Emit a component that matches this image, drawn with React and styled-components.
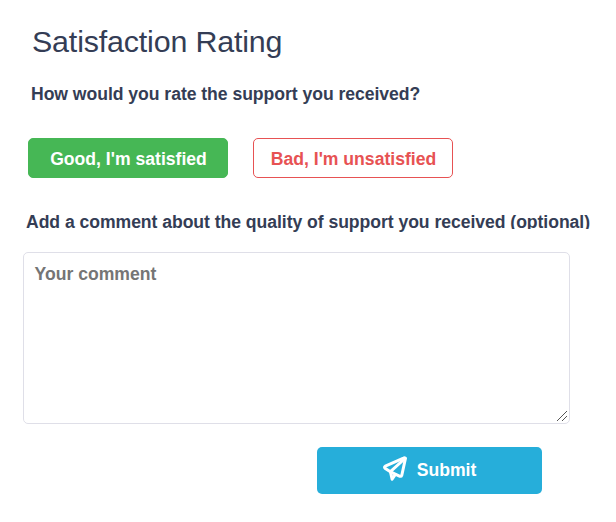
import styled, { createGlobalStyle } from 'styled-components';

const GlobalStyle = createGlobalStyle`
  *, *::before, *::after {
    box-sizing: border-box;
  }

  body {
    margin: 0;
    background-color: #fff;
    color: #343d55;
    font-family: 'Liberation Sans', Arial, sans-serif;
  }
`;

const RatingForm = styled.form`
  display: flex;
  flex-direction: column;
  align-items: flex-start;
  width: 616px;
  height: 522px;
  padding: 21px 0 0 23px;
  overflow: hidden;
`;

const Title = styled.h1`
  margin: 0 0 0 9px;
  font-size: 30.4px;
  font-weight: 400;
  letter-spacing: -0.16px;
  line-height: 40px;
`;

const Question = styled.p`
  margin: 21px 0 0 8px;
  font-size: 17.6px;
  font-weight: 700;
  letter-spacing: -0.04px;
  line-height: 24px;
`;

const RatingButtons = styled.div`
  display: flex;
  gap: 25px;
  margin: 32px 0 0 5px;
`;

const RatingButton = styled.button`
  width: 200px;
  height: 40px;
  padding: 2px 0 0 1px;
  border: 1px solid ${ ({ $color }) => $color };
  border-radius: 5px;
  background-color: ${ ({ $filled, $color }) => $filled ? $color : '#fff' };
  color: ${ ({ $filled, $color }) => $filled ? '#fff' : $color };
  font: 700 17.6px 'Liberation Sans', Arial, sans-serif;
`;

const CommentLabel = styled.label`
  margin: 32px 0 0 3px;
  font-size: 17.6px;
  font-weight: 700;
  letter-spacing: -0.045px;
  line-height: 24px;
  white-space: nowrap;
`;

const OptionalHint = styled.span`
  display: inline-block;
  height: 19px;
  overflow: hidden;
  vertical-align: top;
`;

const CommentBox = styled.div`
  position: relative;
  width: 547px;
  height: 172px;
  margin-top: 18px;
`;

const CommentField = styled.textarea`
  display: block;
  width: 100%;
  height: 100%;
  padding: 11px 10.5px;
  border: 1px solid #dfdfe8;
  border-radius: 5px;
  background-color: #fff;
  color: #343d55;
  font: 700 17.6px 'Liberation Sans', Arial, sans-serif;
  resize: none;

  &::placeholder {
    color: #757575;
  }
`;

const ResizeGrip = styled.svg`
  position: absolute;
  right: 2px;
  bottom: 2px;
  width: 12px;
  height: 12px;
  fill: none;
  stroke: #555;
  stroke-width: 1;
  pointer-events: none;
`;

const SubmitButton = styled.button`
  display: flex;
  align-items: center;
  justify-content: center;
  gap: 7px;
  width: 225px;
  height: 47px;
  margin: 23px 0 0 294px;
  padding: 0 3px 1px 0;
  border: 0;
  border-radius: 5px;
  background-color: #26aeda;
  color: #fff;
  font: 700 17.6px 'Liberation Sans', Arial, sans-serif;
`;

const SubmitIcon = styled.svg`
  width: 30px;
  height: 30px;
  margin-bottom: 4px;
  fill: none;
  stroke: currentColor;
  stroke-width: 3;
  stroke-linecap: round;
  stroke-linejoin: round;
`;

export default function App() {
  return (
    <>
      <GlobalStyle />
      <RatingForm>
        <Title>Satisfaction Rating</Title>
        <Question>How would you rate the support you received?</Question>
        <RatingButtons>
          <RatingButton type="button" $color="#46b755" $filled>Good, I'm satisfied</RatingButton>
          <RatingButton type="button" $color="#e75253">Bad, I'm unsatisfied</RatingButton>
        </RatingButtons>
        <CommentLabel htmlFor="comment">
          Add a comment about the quality of support you received <OptionalHint>(optional)</OptionalHint>
        </CommentLabel>
        <CommentBox>
          <CommentField id="comment" placeholder="Your comment" />
          <ResizeGrip viewBox="0 0 12 12">
            <path d="M1 11 11 1M6 11 11 6" />
          </ResizeGrip>
        </CommentBox>
        <SubmitButton type="button">
          <SubmitIcon viewBox="0 0 30 30">
            <path d="M25.5 5.2Q24.5 4.6 23.5 5.1L5.3 13.2Q3.7 14.3 5.3 15.5L10 18.6 20 23.3Q21.3 23.6 21.8 22.2Z" />
            <path d="M25 5.5 10.4 18.7 12.1 26.2 15.4 21.5" />
          </SubmitIcon>
          Submit
        </SubmitButton>
      </RatingForm>
    </>
  )
}
